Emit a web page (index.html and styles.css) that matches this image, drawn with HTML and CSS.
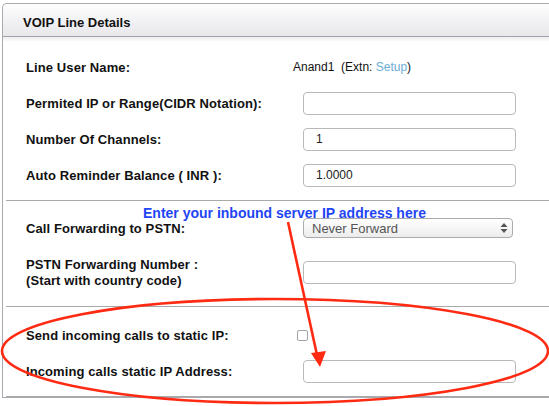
FILE: index.html
```html
<!DOCTYPE html>
<html>
<head>
<meta charset="utf-8">
<link rel="stylesheet" href="styles.css">
</head>
<body>
<div class="panel">
  <div class="panel-head">VOIP Line Details</div>
  <div class="panel-band"></div>
  <div class="section s1">
    <div class="row"><div class="label">Line User Name:</div><div class="value-text">Anand1&nbsp;&nbsp;(Extn: <span class="link">Setup</span>)</div></div>
    <div class="row"><div class="label">Permited IP or Range(CIDR Notation):</div><div class="value"><input class="field" type="text" value=""></div></div>
    <div class="row"><div class="label">Number Of Channels:</div><div class="value"><input class="field" type="text" value="1"></div></div>
    <div class="row"><div class="label">Auto Reminder Balance ( INR ):</div><div class="value"><input class="field" type="text" value="1.0000"></div></div>
  </div>
  <div class="section s2">
    <div class="row"><div class="label">Call Forwarding to PSTN:</div><div class="value"><div class="select"><span>Never Forward</span><svg class="updown" width="8" height="12" viewBox="0 0 8 12"><path d="M4 1 L7.5 5 L0.5 5 Z M4 11 L7.5 7 L0.5 7 Z" fill="#555"/></svg></div></div></div>
    <div class="row tall"><div class="label">PSTN Forwarding Number :<br>(Start with country code)</div><div class="value"><input class="field" type="text" value=""></div></div>
  </div>
  <div class="section s3">
    <div class="row"><div class="label">Send incoming calls to static IP:</div><div class="value"><span class="check"></span></div></div>
    <div class="row"><div class="label">Incoming calls static IP Address:</div><div class="value"><input class="field" type="text" value=""></div></div>
  </div>
</div>
<div class="note">Enter your inbound server IP address here</div>
<svg class="marks" width="549" height="406" viewBox="0 0 549 406">
  <ellipse cx="275" cy="351" rx="273" ry="52" fill="none" stroke="#ff2a12" stroke-width="2.6"/>
  <line x1="288" y1="222" x2="317" y2="355" stroke="#ff2a12" stroke-width="2.6"/>
  <path d="M311 353 L326 351 L320 367 Z" fill="#ff2a12"/>
</svg>
</body>
</html>
```
FILE: styles.css
```css
html, body {
  margin: 0;
  padding: 0;
  background: #ffffff;
  overflow: hidden;
  width: 549px;
  height: 406px;
}
body {
  position: relative;
  font-family: "Liberation Sans", Arial, Helvetica, sans-serif;
  color: #111;
}
.panel {
  margin: 3px 0 0 2px;
  width: 546px;
  border: 1px solid #a9a9b1;
  border-right: none;
  border-radius: 5px 0 0 0;
  background: #fff;
}
.panel-head {
  height: 33px;
  box-sizing: border-box;
  padding: 11px 0 0 20px;
  font-size: 13px;
  font-weight: bold;
  line-height: 15px;
  background: linear-gradient(#fdfdfd, #e8e8ec);
  border-bottom: 1px solid #a4a4ac;
  border-radius: 5px 0 0 0;
}
.panel-band {
  height: 4px;
  background: linear-gradient(#efeff2, #fafafa);
}
.section {
  margin-left: 3px;
  border-bottom: 1px solid #a9a9a9;
}
.s1 { padding: 8px 0 7px; }
.s2 { padding: 9px 0 8px; }
.s3 { padding: 10px 0 7px; }
.row {
  display: flex;
  align-items: center;
  height: 36px;
}
.row.tall { height: 52px; }
.label {
  width: 287px;
  flex: none;
  padding: 1px 0 0 20px;
  box-sizing: border-box;
  font-size: 13px;
  font-weight: bold;
  line-height: 16px;
  letter-spacing: 0.1px;
  color: #111;
}
.value {
  display: flex;
  align-items: center;
}
.value-text {
  font-size: 12px;
  color: #111;
  white-space: nowrap;
}
.link { color: #6aaed6; }
.field {
  margin: 0 0 0 10px;
  width: 213px;
  height: 23px;
  box-sizing: border-box;
  border: 1px solid #b9b9b9;
  border-radius: 4px;
  padding: 0 12px;
  font-family: "Liberation Sans", Arial, sans-serif;
  font-size: 12px;
  color: #222;
  background: #fff;
  outline: none;
}
.select {
  margin-left: 10px;
  width: 210px;
  height: 20px;
  box-sizing: border-box;
  border: 1px solid #ababab;
  border-radius: 4px;
  background: linear-gradient(#ffffff, #ececec);
  display: flex;
  align-items: center;
  justify-content: space-between;
  padding: 0 4px 0 8px;
  font-size: 13px;
  color: #555;
}
.updown { display: block; }
.check {
  display: block;
  margin-left: 4px;
  width: 11px;
  height: 11px;
  box-sizing: border-box;
  border: 1px solid #a3a3a3;
  border-radius: 2px;
  background: #fff;
}
.note {
  position: absolute;
  left: 143px;
  top: 206px;
  font-size: 14px;
  line-height: 15px;
  font-weight: bold;
  color: #1f45f5;
  white-space: nowrap;
}
.marks {
  position: absolute;
  left: 0;
  top: 0;
  pointer-events: none;
}
```
